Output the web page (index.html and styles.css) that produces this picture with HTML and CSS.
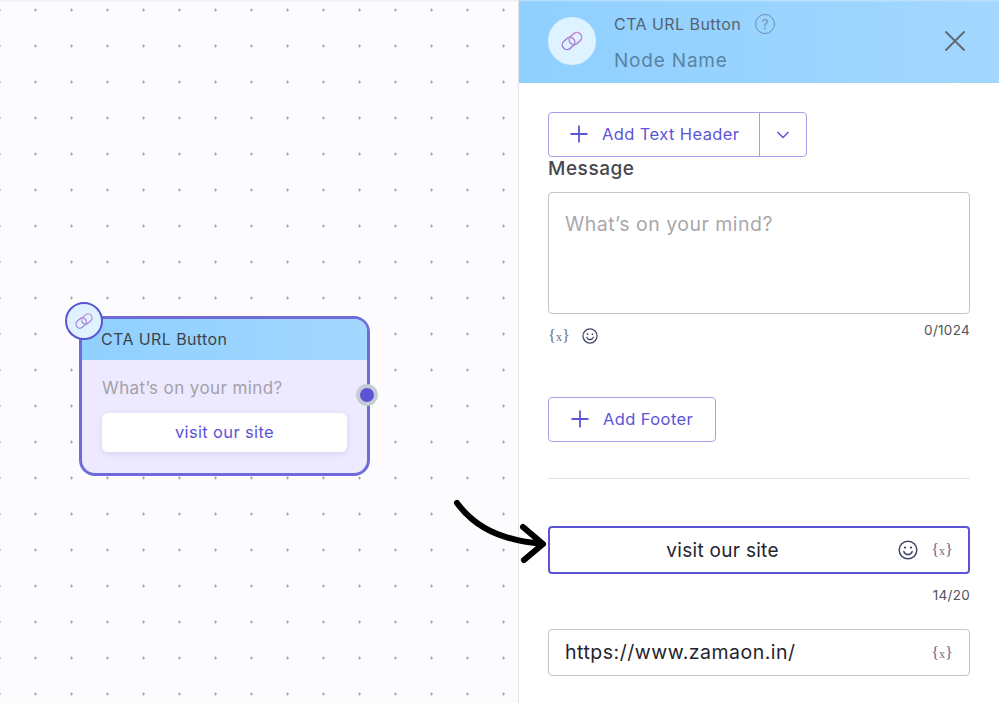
FILE: index.html
```html
<!DOCTYPE html>
<html lang="en">
<head>
<meta charset="utf-8">
<title>CTA URL Button</title>
<link rel="stylesheet" href="styles.css">
</head>
<body>
<svg class="defs" width="0" height="0" aria-hidden="true">
  <defs>
    <linearGradient id="linkGrad" gradientUnits="userSpaceOnUse" x1="2" y1="22" x2="22" y2="2">
      <stop offset="0" stop-color="#8f7be0"/>
      <stop offset="1" stop-color="#d58ac8"/>
    </linearGradient>
    <symbol id="link" viewBox="0 0 24 24">
      <g fill="none" stroke="url(#linkGrad)" stroke-width="1.500">
        <rect x="1.800" y="9.700" width="13.500" height="9.500" rx="4.750" transform="rotate(-42 8.550 14.450)"/>
        <rect x="8.700" y="4.800" width="13.500" height="9.500" rx="4.750" transform="rotate(-42 15.450 9.550)"/>
      </g>
    </symbol>
    <symbol id="smile" viewBox="0 0 20 20">
      <g fill="none" stroke="#3d4468" stroke-width="1.500" stroke-linecap="round">
        <circle cx="10" cy="10" r="8.800"/>
        <path d="M5.800 11.600c1 2.100 2.500 3 4.200 3s3.200-.9 4.200-3"/>
      </g>
      <circle cx="7" cy="7.600" r="1.100" fill="#3d4468"/>
      <circle cx="13" cy="7.600" r="1.100" fill="#3d4468"/>
    </symbol>
    <symbol id="plus" viewBox="0 0 18 18">
      <path d="M9 .5v17M.5 9h17" fill="none" stroke="#5b55d6" stroke-width="1.800"/>
    </symbol>
  </defs>
</svg>

<main class="app">
  <section class="canvas">
    <article class="node">
      <span class="node-badge"><svg class="node-link"><use href="#link"/></svg></span>
      <header class="node-head">CTA URL Button</header>
      <div class="node-body">
        <p class="node-msg">What’s on your mind?</p>
        <div class="node-btn">visit our site</div>
      </div>
      <span class="node-port"></span>
    </article>
    <svg class="arrow" width="100" height="70" viewBox="0 0 100 70">
      <path d="M4 6C16 22 36 42 89 47M70 30l20 17L71 63" fill="none" stroke="#000" stroke-width="6" stroke-linecap="round" stroke-linejoin="round"/>
    </svg>
  </section>

  <aside class="panel">
    <header class="panel-head">
      <span class="head-badge"><svg class="head-link"><use href="#link"/></svg></span>
      <div class="head-text">
        <div class="head-title">
          <span>CTA URL Button</span>
          <span class="help">?</span>
        </div>
        <div class="head-name">Node Name</div>
      </div>
      <svg class="close" width="22" height="22" viewBox="0 0 22 22">
        <path d="M1.500 1.500l19 19M20.500 1.500l-19 19" fill="none" stroke="#5f6b75" stroke-width="2"/>
      </svg>
    </header>

    <div class="panel-body">
      <div class="btn split">
        <span class="split-main"><svg class="plus"><use href="#plus"/></svg>Add Text Header</span>
        <span class="split-caret">
          <svg width="14" height="8" viewBox="0 0 14 8"><path d="M1.500 1l5.500 5.500L12.500 1" fill="none" stroke="#5b55d6" stroke-width="1.500"/></svg>
        </span>
      </div>

      <div class="label">Message</div>
      <div class="textarea">What’s on your mind?</div>
      <div class="tools">
        <span class="tool-icons">
          <span class="var">{<i class="var-x">x</i>}</span>
          <svg class="smile-sm"><use href="#smile"/></svg>
        </span>
        <span class="count">0/1024</span>
      </div>

      <div class="btn footer-btn"><svg class="plus"><use href="#plus"/></svg>Add Footer</div>

      <hr class="rule">

      <div class="field focused">
        <span class="field-center">visit our site</span>
        <svg class="smile-lg"><use href="#smile"/></svg>
        <span class="var">{<i class="var-x">x</i>}</span>
      </div>
      <div class="count count-right">14/20</div>
      <div class="field url">
        <span class="field-text">https://www.zamaon.in/</span>
        <span class="var">{<i class="var-x">x</i>}</span>
      </div>
    </div>
  </aside>
</main>
</body>
</html>
```

FILE: styles.css
```css
* { box-sizing: border-box; }
html, body { margin: 0; height: 100%; }
body {
  overflow: hidden;
  background: #fff;
  font-family: "Inter", "Liberation Sans", sans-serif;
  color: #3f3f46;
}
.defs { position: absolute; }
.app {
  display: grid;
  grid-template-columns: 519px 480px;
  height: 703px;
}

/* canvas */
.canvas {
  position: relative;
  border-right: 1px solid #e3e3e8;
  background-color: #fcfcff;
  background-image: radial-gradient(circle at 1.500px 1.500px, #98989d 0, #98989d .8px, transparent 1.500px);
  background-size: 36px 36px;
  background-position: -2px 8.500px;
  box-shadow: inset 0 2px 2px -1px #eeeef2;
}
.node {
  position: absolute;
  left: 79px;
  top: 316px;
  width: 291px;
  height: 160px;
  border: 3px solid #6f6cd9;
  border-radius: 16px;
  background: #ede9fe;
}
.node-head {
  height: 41px;
  padding: 9px 0 0 19px;
  border-radius: 12px 12px 0 0;
  background: linear-gradient(90deg, #8fd0ff, #a3d7ff);
  font-size: 16px;
  letter-spacing: .4px;
  line-height: 22px;
  color: #3f4348;
}
.node-body { padding: 17px 20px 0; }
.node-msg {
  margin: 0 0 14px;
  font-size: 17px;
  letter-spacing: .4px;
  line-height: 22px;
  color: #a3a1a9;
}
.node-btn {
  height: 39px;
  border-radius: 6px;
  background: #fff;
  box-shadow: 0 2px 6px rgba(90, 80, 200, .12);
  text-align: center;
  font-size: 16.500px;
  letter-spacing: .35px;
  line-height: 38px;
  color: #5b55d6;
}
.node-badge {
  position: absolute;
  left: -17px;
  top: -17px;
  width: 38px;
  height: 38px;
  display: flex;
  align-items: center;
  justify-content: center;
  border: 2px solid #5b55d6;
  border-radius: 50%;
  background: #dff2ff;
}
.node-link { width: 20px; height: 20px; }
.node-port {
  position: absolute;
  right: -11px;
  top: 65px;
  width: 22px;
  height: 22px;
  border: 4px solid #c6cad6;
  border-radius: 50%;
  background: #5b55d6;
}
.arrow {
  position: absolute;
  left: 453px;
  top: 497px;
  overflow: visible;
  z-index: 2;
}

/* panel */
.panel { background: #fff; }
.panel-head {
  height: 83px;
  display: flex;
  align-items: flex-start;
  padding: 17px 33px 0 29px;
  background: linear-gradient(90deg, #8fd0ff, #a3d7ff);
  box-shadow: inset 0 2px 2px -1px #c4e4fb;
}
.head-badge {
  width: 48px;
  height: 48px;
  flex: none;
  display: flex;
  align-items: center;
  justify-content: center;
  border-radius: 50%;
  background: #dff2ff;
}
.head-link { width: 24px; height: 24px; }
.head-text { margin-left: 18px; flex: 1; }
.head-title {
  display: flex;
  align-items: center;
  gap: 14px;
  margin-top: -4px;
  height: 22px;
  font-size: 16px;
  letter-spacing: .45px;
  color: #56626f;
}
.help {
  width: 20px;
  height: 20px;
  display: flex;
  align-items: center;
  justify-content: center;
  border: 1.500px solid #6f8eaa;
  border-radius: 50%;
  font-size: 13px;
  letter-spacing: 0;
  color: #6f8eaa;
}
.head-name {
  margin-top: 14px;
  font-size: 19px;
  letter-spacing: .8px;
  line-height: 24px;
  color: #5a83a3;
}
.close { margin-top: 13px; }

.panel-body { padding: 29px 29px 0; }
.btn {
  display: flex;
  align-items: center;
  height: 45px;
  border: 1px solid #a79fe8;
  border-radius: 4px;
  background: #fff;
  font-size: 16.500px;
  letter-spacing: .4px;
  color: #5b55d6;
}
.plus { width: 18px; height: 18px; flex: none; }
.split { width: 259px; }
.split-main {
  display: flex;
  align-items: center;
  gap: 14px;
  width: 211px;
  height: 100%;
  padding: 0 0 2px 21px;
  border-right: 1px solid #a79fe8;
}
.split-caret {
  flex: 1;
  display: flex;
  align-items: center;
  justify-content: center;
}
.label {
  margin-top: 1px;
  height: 34px;
  font-size: 19px;
  font-weight: 500;
  letter-spacing: .55px;
  line-height: 22px;
  color: #48484d;
}
.textarea {
  height: 122px;
  padding: 18px 16px;
  border: 1px solid #c4c4c8;
  border-radius: 4px;
  font-size: 19.500px;
  letter-spacing: .5px;
  line-height: 26px;
  color: #a8a8ac;
}
.tools {
  display: flex;
  justify-content: space-between;
  height: 83px;
  padding-top: 6px;
}
.tool-icons {
  display: flex;
  align-items: center;
  gap: 12px;
  height: 32px;
}
.smile-sm { width: 16px; height: 16px; }
.smile-lg { width: 20px; height: 20px; flex: none; }
.var {
  flex: none;
  font-family: "Liberation Serif", serif;
  font-size: 16.500px;
  letter-spacing: 0;
  color: #6a6f84;
}
.var-x {
  font-size: 12px;
  font-style: normal;
}
.count {
  font-size: 13.500px;
  letter-spacing: .3px;
  line-height: 20px;
  color: #52525b;
}
.footer-btn {
  width: 168px;
  gap: 14px;
  padding: 0 0 2px 22px;
}
.rule {
  margin: 36px 0 47px;
  border: 0;
  border-top: 1px solid #e2e2e6;
}
.field {
  display: flex;
  align-items: center;
  gap: 13px;
  border-radius: 4px;
  font-size: 19px;
  color: #24242c;
}
.focused {
  height: 48px;
  padding: 0 15px 0 16px;
  border: 2px solid #5b55d6;
}
.field-center {
  flex: 1;
  padding-right: 6px;
  text-align: center;
  letter-spacing: .3px;
}
.count-right {
  height: 55px;
  padding-top: 11px;
  text-align: right;
}
.url {
  height: 47px;
  padding: 0 16px;
  border: 1px solid #c4c4c8;
}
.field-text {
  flex: 1;
  padding-bottom: 1px;
  font-size: 19.500px;
  letter-spacing: .5px;
}
```
